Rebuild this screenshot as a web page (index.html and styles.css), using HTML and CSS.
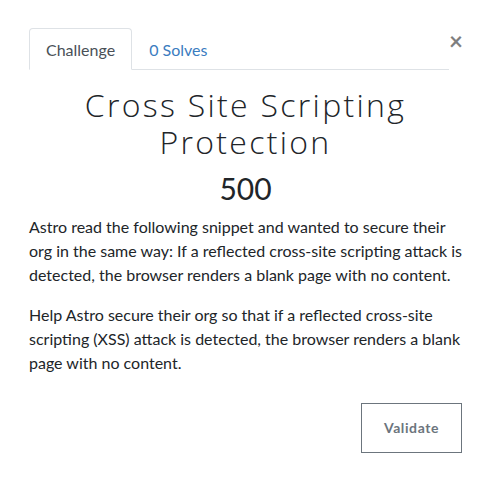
FILE: index.html
```html
<!DOCTYPE html>
<html lang="en">
<head>
<meta charset="utf-8">
<title>Challenge</title>
<link rel="stylesheet" href="styles.css">
</head>
<body>
<div class="modal-body">
  <div class="tab-row">
    <ul class="nav-tabs">
      <li class="nav-item"><a class="nav-link active" href="#">Challenge</a></li>
      <li class="nav-item"><a class="nav-link" href="#">0 Solves</a></li>
    </ul>
    <button class="close" type="button" aria-label="Close">&times;</button>
  </div>
  <h2 class="challenge-name">Cross Site Scripting Protection</h2>
  <h3 class="challenge-value">500</h3>
  <div class="challenge-desc">
    <p>Astro read the following snippet and wanted to secure their org in the same way: If a reflected cross-site scripting attack is detected, the browser renders a blank page with no content.</p>
    <p>Help Astro secure their org so that if a reflected cross-site scripting (XSS) attack is detected, the browser renders a blank page with no content.</p>
  </div>
  <div class="actions">
    <button class="btn-validate" type="button">Validate</button>
  </div>
</div>
</body>
</html>
```

FILE: styles.css
```css
html, body {
  margin: 0;
  padding: 0;
  background: #fff;
}
body {
  font-family: Lato, "Liberation Sans", sans-serif;
  font-size: 16px;
  line-height: 24px;
  color: #212529;
}
.modal-body {
  padding: 28px 29px 20px 29px;
}
.tab-row {
  display: flex;
  align-items: flex-start;
}
.nav-tabs {
  flex: 1;
  display: flex;
  list-style: none;
  margin: 0;
  padding: 0;
  border-bottom: 1px solid #dee2e6;
}
.nav-item {
  margin-bottom: -1px;
}
.nav-link {
  display: block;
  padding: 9px 16px 7px 16px;
  border: 1px solid transparent;
  border-top-left-radius: 4px;
  border-top-right-radius: 4px;
  color: #3a7cc0;
  text-decoration: none;
}
.nav-link.active {
  color: #495057;
  background: #fff;
  border-color: #dee2e6 #dee2e6 #fff;
}
.close {
  width: 13px;
  margin-top: 1px;
  padding: 0;
  border: 0;
  background: transparent;
  font-family: Lato, "Liberation Sans", sans-serif;
  font-size: 24px;
  font-weight: 700;
  line-height: 24px;
  color: #000;
  opacity: 0.5;
  text-shadow: 0 1px 0 #fff;
  cursor: pointer;
}
.challenge-name {
  margin: 0 0 8px 0;
  padding-top: 17px;
  text-align: center;
  font-family: "Open Sans", "Liberation Sans", sans-serif;
  font-weight: 300;
  font-size: 32px;
  line-height: 36.8px;
  letter-spacing: 2.3px;
  color: #212529;
}
.challenge-value {
  margin: 0 0 9px 0;
  padding-top: 1px;
  text-align: center;
  font-weight: 400;
  font-size: 30px;
  line-height: 36px;
  color: #212529;
}
.challenge-desc p {
  margin: 0 0 16px 0;
}
.actions {
  display: flex;
  justify-content: flex-end;
  padding-top: 12px;
}
.btn-validate {
  width: 101px;
  height: 50px;
  border: 1px solid #6c757d;
  border-radius: 0;
  background: #fff;
  color: #6c757d;
  font-family: Lato, "Liberation Sans", sans-serif;
  font-size: 14px;
  font-weight: 700;
  letter-spacing: 0.6px;
  cursor: pointer;
}
```
